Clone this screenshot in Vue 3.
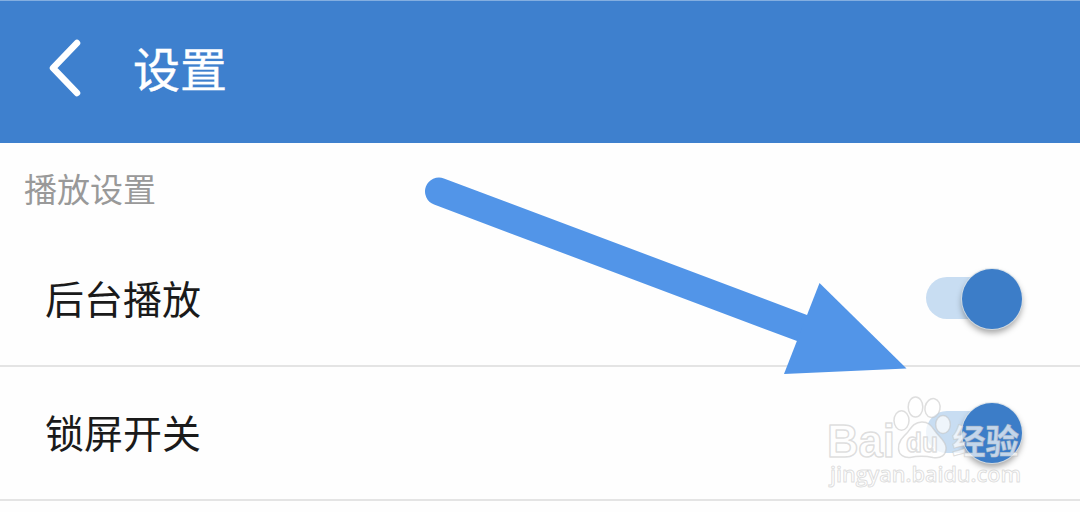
<template>
  <div class="settings-page">
    <header class="header">
      <button class="back-btn" title="返回">
        <svg width="34" height="60" viewBox="0 0 34 60">
          <path d="M30 5 L6 30 L30 55" />
        </svg>
      </button>
      <h1 class="title">设置</h1>
    </header>

    <main>
      <h2 class="section-title">播放设置</h2>
      <div v-for="item in items" :key="item.key" class="row" @click="item.on = !item.on">
        <span class="row-label">{{ item.label }}</span>
        <span class="switch" :class="{ on: item.on }">
          <span class="thumb"></span>
        </span>
      </div>
    </main>

    <svg class="arrow" width="1080" height="512" viewBox="0 0 1080 512">
      <line x1="439" y1="191.500" x2="810" y2="331" />
      <polygon points="819.500,283 906.500,368.500 784,374" />
    </svg>

    <svg class="watermark" width="210" height="110" viewBox="820 385 210 110">
      <text class="brand" x="827" y="457" textLength="68" lengthAdjust="spacingAndGlyphs">Bai</text>
      <g class="paw">
        <ellipse cx="901.500" cy="420.500" rx="7.500" ry="9.700" />
        <ellipse cx="915.500" cy="407" rx="7.300" ry="10" />
        <ellipse cx="932.500" cy="408" rx="7.500" ry="9.500" transform="rotate(12 932.500 408)" />
        <ellipse cx="943" cy="424.500" rx="7.300" ry="9" />
        <path d="M922 422 C914 422 911 428 907 433 C902 438 898 442 898.500 449 C899 455 904 458 910 457.500 C917 456 926 456 933 457.500 C941 459 946 455 946 448 C946 441 939 437 935 431 C931 425 928 422 922 422 Z" />
      </g>
      <text class="du" x="906" y="452" textLength="32" lengthAdjust="spacingAndGlyphs">du</text>
      <text class="cjk" x="952" y="454" textLength="67" lengthAdjust="spacingAndGlyphs">经验</text>
      <text class="url" x="830" y="482" textLength="191" lengthAdjust="spacingAndGlyphs">jingyan.baidu.com</text>
    </svg>
  </div>
</template>

<script setup>
import { ref } from 'vue'

const items = ref([
  { key: 'background', label: '后台播放', on: true },
  { key: 'lockscreen', label: '锁屏开关', on: true }
])
</script>

<style>
body {
  margin: 0;
  background: #fefefe;
}
</style>

<style scoped>
.settings-page {
  position: relative;
  width: 1080px;
  height: 512px;
  overflow: hidden;
  background: #fefefe;
  font-family: "Noto Sans CJK SC", sans-serif;
}

.header {
  display: flex;
  align-items: center;
  gap: 52px;
  box-sizing: border-box;
  height: 143px;
  padding: 0 47px 8px;
  border-top: 1px solid #83aee0;
  background: #3e80ce;
}

.back-btn {
  display: flex;
  padding: 0;
  border: none;
  background: none;
  cursor: pointer;
}

.back-btn path {
  fill: none;
  stroke: #ffffff;
  stroke-width: 6.5;
  stroke-linecap: round;
  stroke-linejoin: round;
}

.title {
  margin: 0;
  padding-bottom: 2px;
  font-size: 47px;
  font-weight: 400;
  line-height: 60px;
  color: #ffffff;
  -webkit-text-stroke: 0.4px #ffffff;
}

.section-title {
  box-sizing: border-box;
  height: 90px;
  margin: 0;
  padding: 21px 24px 0;
  font-size: 33px;
  font-weight: 400;
  line-height: 48px;
  color: #999999;
}

.row {
  display: flex;
  align-items: center;
  justify-content: space-between;
  box-sizing: border-box;
  height: 134px;
  padding: 0 58px 0 45px;
  border-bottom: 2px solid #e4e4e4;
  cursor: pointer;
}

.row-label {
  padding-bottom: 4px;
  font-size: 39px;
  line-height: 56px;
  color: #1a1a1a;
}

.switch {
  display: flex;
  align-items: center;
  width: 96px;
  height: 42px;
  margin-bottom: 2px;
  border-radius: 21px;
  background: #dddddd;
}

.switch.on {
  justify-content: flex-end;
  background: #c8ddf2;
}

.thumb {
  width: 60px;
  height: 60px;
  margin: 1px 0.5px 0 0;
  border-radius: 50%;
  background: #999999;
  box-shadow: 0 0 0 1px rgba(215, 225, 232, 0.8), 0 4px 6px rgba(0, 0, 0, 0.36);
}

.on .thumb {
  background: #3c7dc8;
}

.arrow {
  position: absolute;
  top: 0;
  left: 0;
  pointer-events: none;
}

.arrow line {
  stroke: #5295e8;
  stroke-width: 28;
  stroke-linecap: round;
}

.arrow polygon {
  fill: #5295e8;
}

.watermark {
  position: absolute;
  top: 385px;
  left: 820px;
  pointer-events: none;
  fill: rgba(255, 255, 255, 0.7);
  stroke: rgba(195, 195, 195, 0.55);
  stroke-width: 1.5;
  stroke-linejoin: round;
}

.brand {
  font: 700 46px "Liberation Sans", Arial, sans-serif;
}

.du {
  font: 700 28px "Liberation Sans", Arial, sans-serif;
}

.cjk {
  font: 700 34px "Noto Sans CJK SC", sans-serif;
  stroke-width: 1;
}

.url {
  font: 600 22px "Open Sans", "Noto Sans", sans-serif;
  stroke-width: 1;
}
</style>
